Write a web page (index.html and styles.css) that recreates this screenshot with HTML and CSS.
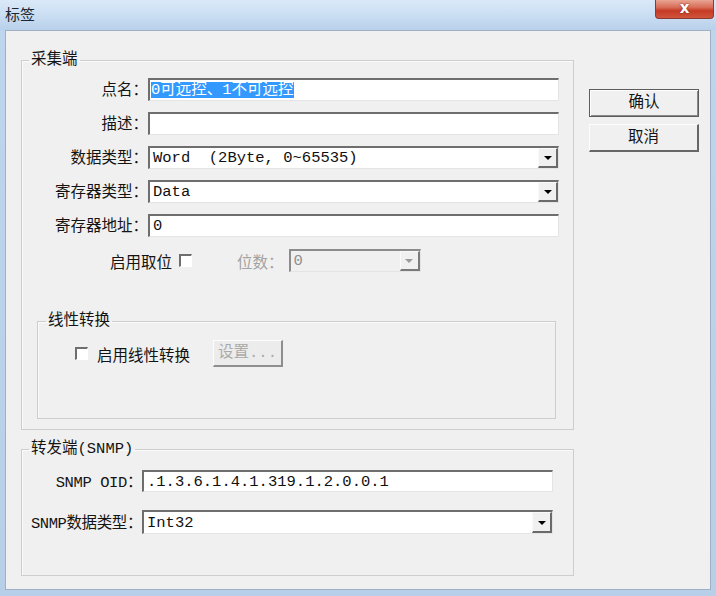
FILE: index.html
```html
<!DOCTYPE html>
<html lang="zh-CN">
<head>
<meta charset="utf-8">
<title>标签</title>
<link rel="stylesheet" href="styles.css">
</head>
<body>
<div class="window">
  <div class="titlebar">
    <span class="title">标签</span>
    <div class="close"><span>x</span></div>
  </div>
  <div class="client">
    <div class="main">
      <fieldset class="group g1">
        <legend>采集端</legend>
        <div class="row">
          <label class="lbl">点名<span class="colon">：</span></label>
          <div class="field"><span class="sel">0可远控、1不可远控</span></div>
        </div>
        <div class="row">
          <label class="lbl">描述<span class="colon">：</span></label>
          <div class="field"></div>
        </div>
        <div class="row">
          <label class="lbl">数据类型<span class="colon">：</span></label>
          <div class="field combo"><span class="val">Word  (2Byte, 0~65535)</span><span class="drop"><i class="tri"></i></span></div>
        </div>
        <div class="row">
          <label class="lbl">寄存器类型<span class="colon">：</span></label>
          <div class="field combo"><span class="val">Data</span><span class="drop"><i class="tri"></i></span></div>
        </div>
        <div class="row">
          <label class="lbl">寄存器地址<span class="colon">：</span></label>
          <div class="field"><span class="val">0</span></div>
        </div>
        <div class="bitrow">
          <span class="txt">启用取位</span>
          <span class="check"></span>
          <span class="txt dis bitlbl">位数<span class="colon">：</span></span>
          <div class="field combo disabled bitcombo"><span class="val">0</span><span class="drop"><i class="tri"></i></span></div>
        </div>
        <fieldset class="group inner">
          <legend>线性转换</legend>
          <div class="linrow">
            <span class="check"></span>
            <span class="txt lintxt">启用线性转换</span>
            <span class="btn disabledbtn">设置...</span>
          </div>
        </fieldset>
      </fieldset>
      <fieldset class="group g2">
        <legend>转发端(SNMP)</legend>
        <div class="row2">
          <label class="lbl2">SNMP OID<span class="colon">：</span></label>
          <div class="field"><span class="val">.1.3.6.1.4.1.319.1.2.0.0.1</span></div>
        </div>
        <div class="row2 second">
          <label class="lbl2">SNMP数据类型<span class="colon">：</span></label>
          <div class="field combo tall"><span class="val">Int32</span><span class="drop"><i class="tri"></i></span></div>
        </div>
      </fieldset>
    </div>
    <div class="buttons">
      <span class="btn default">确认</span>
      <span class="btn">取消</span>
    </div>
  </div>
</div>
</body>
</html>
```
FILE: styles.css
```css
html, body {
  margin: 0;
  padding: 0;
}
body {
  width: 716px;
  height: 596px;
  overflow: hidden;
  font-family: "Liberation Mono", "Noto Sans CJK SC", monospace;
  font-size: 15.5px;
  color: #141414;
  background: #b3cce6;
}
.window {
  height: 596px;
  display: flex;
  flex-direction: column;
  background: linear-gradient(to bottom, #d4e5f6 0px, #bdd5ee 30px, #b7cfe8 100%);
  padding: 0 5px 6px 5px;
  box-sizing: border-box;
}
.titlebar {
  height: 30px;
  display: flex;
  align-items: flex-start;
  margin: 0 -5px;
  padding: 0 2px 0 5px;
  background: linear-gradient(to bottom, #dae9f8 0%, #c9ddf2 55%, #b8d0ea 100%);
}
.title {
  font-family: "Noto Sans CJK SC", sans-serif;
  font-size: 15px;
  line-height: 16px;
  margin-top: 6px;
  color: #1d2630;
}
.close {
  margin-left: auto;
  width: 59px;
  height: 19px;
  border: 1px solid #8a3a30;
  border-top: none;
  border-radius: 0 0 4px 4px;
  box-sizing: border-box;
  background: linear-gradient(to bottom, #e9a594 0%, #d86e59 40%, #c63a24 60%, #d0553d 100%);
  display: flex;
  justify-content: center;
  align-items: center;
}
.close span {
  font-family: "DejaVu Sans", sans-serif;
  font-weight: bold;
  font-size: 15px;
  line-height: 14px;
  color: #fff;
  text-shadow: 0 0 2px #6b1a10;
  margin-top: -2px;
}
.client {
  flex: 1;
  display: flex;
  background: #f0f0f0;
  border: 1px solid #9fb0c4;
  padding: 21px 0 0 15px;
}
.main {
  width: 553px;
  display: flex;
  flex-direction: column;
}
.group {
  margin: 0;
  padding: 0;
  border: 1px solid #cdcdcd;
  box-shadow: inset 1px 1px #fafafa;
  min-width: 0;
}
.group legend {
  font-size: 15.5px;
  line-height: 16px;
  height: 16px;
  padding: 0 2px;
  margin-left: 7px;
  color: #141414;
}
.colon {
  font-family: "Noto Sans CJK TC", "Noto Sans CJK SC", sans-serif;
}
.g1 {
  padding: 10px 14px 10px 0;
}
.row {
  display: flex;
  align-items: center;
  height: 23px;
  margin-bottom: 11px;
}
.row:last-of-type {
  margin-bottom: 0;
}
.lbl {
  width: 126px;
  flex: none;
  text-align: right;
  padding-right: 0;
  box-sizing: border-box;
  line-height: 16px;
  white-space: nowrap;
}
.field {
  flex: 1;
  height: 23px;
  box-sizing: border-box;
  background: #fff;
  border-top: 2px solid #6e6e6e;
  border-left: 2px solid #6e6e6e;
  border-right: 1px solid #e4e4e4;
  border-bottom: 1px solid #e4e4e4;
  display: flex;
  align-items: center;
  padding-left: 1px;
  white-space: pre;
  line-height: 16px;
  color: #101010;
}
.val {
  flex: 1;
  padding-left: 2px;
}
.sel {
  background: #3399ff;
  color: #fff;
  line-height: 16px;
}
.combo {
  padding-right: 0;
}
.drop {
  width: 20px;
  height: 100%;
  flex: none;
  box-sizing: border-box;
  background: #f0f0f0;
  border-top: 1px solid #fafafa;
  border-left: 1px solid #fafafa;
  border-right: 2px solid #6a6a6a;
  border-bottom: 2px solid #6a6a6a;
  display: flex;
  align-items: center;
  justify-content: center;
}
.tri {
  width: 0;
  height: 0;
  border-left: 4px solid transparent;
  border-right: 4px solid transparent;
  border-top: 4px solid #000;
  margin-top: 1px;
}
.bitrow {
  display: flex;
  align-items: center;
  margin-top: 12px;
  height: 23px;
  padding-left: 88px;
}
.txt {
  line-height: 16px;
  font-family: "Noto Sans CJK SC", sans-serif;
}
.check {
  width: 13px;
  height: 13px;
  flex: none;
  box-sizing: border-box;
  background: #fff;
  border-top: 2px solid #6e6e6e;
  border-left: 2px solid #6e6e6e;
  border-right: 1px solid #fff;
  border-bottom: 1px solid #fff;
}
.bitrow .check {
  margin-left: 7px;
}
.dis {
  color: #a3a3a3;
}
.bitlbl {
  margin-left: 45px;
}
.bitcombo {
  flex: none;
  width: 132px;
  margin-left: 5px;
}
.disabled {
  background: #f0f0f0;
  color: #8f8f8f;
  border-top-color: #8c8c8c;
  border-left-color: #8c8c8c;
}
.disabled .tri {
  border-top-color: #9a9a9a;
}
.disabled .drop {
  border-right-color: #7a7a7a;
  border-bottom-color: #7a7a7a;
}
.inner {
  margin: 41px 3px 0 15px;
  padding: 11px 0 51px 0;
}
.inner legend {
  margin-left: 8px;
}
.linrow {
  display: flex;
  align-items: center;
  height: 27px;
  padding-left: 37px;
}
.lintxt {
  margin-left: 9px;
}
.btn {
  display: flex;
  align-items: center;
  justify-content: center;
  box-sizing: border-box;
  line-height: 16px;
  background: #f0f0f0;
  border-top: 1px solid #fdfdfd;
  border-left: 1px solid #fdfdfd;
  border-right: 2px solid #676767;
  border-bottom: 2px solid #676767;
  color: #141414;
}
.disabledbtn {
  width: 70px;
  height: 27px;
  margin-left: 23px;
  color: #aaaaaa;
  background: #ececec;
  border-right-color: #8e8e8e;
  border-bottom-color: #8e8e8e;
}
.g2 {
  margin-top: 11px;
  padding: 13px 20px 41px 0;
}
.row2 {
  display: flex;
  align-items: center;
  height: 22px;
}
.row2 .field {
  height: 22px;
}
.row2.second {
  margin-top: 18px;
  height: 24px;
}
.row2 .field.tall {
  height: 24px;
}
.lbl2 {
  width: 120px;
  flex: none;
  text-align: right;
  padding-right: 0;
  box-sizing: border-box;
  white-space: nowrap;
  line-height: 16px;
  letter-spacing: -0.4px;
}
.buttons {
  display: flex;
  flex-direction: column;
  gap: 7px;
  margin-left: 15px;
  margin-top: 37px;
}
.buttons .btn {
  width: 110px;
  height: 28px;
}
.btn.default {
  border: 1px solid #5c5c5c;
  box-shadow: inset 1px 1px #ffffff, inset -1px -1px #8a8a8a;
}
```
